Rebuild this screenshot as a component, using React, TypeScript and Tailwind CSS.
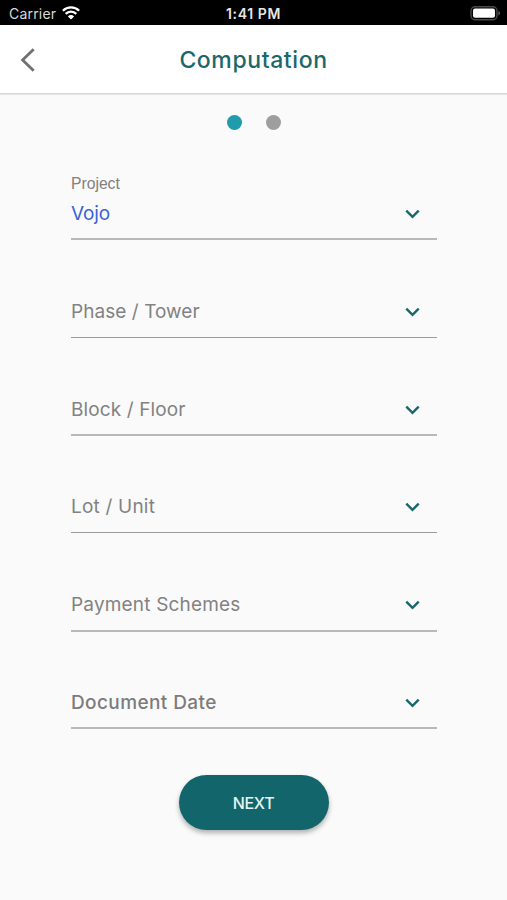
import React from 'react';

type Field = {
  label: string;
  value?: string;
  textClass: string;
  lineClass: string;
};

const THIN = 'h-px bg-[#9b9b9b]';
const THICK = 'h-[2px] bg-[#b8b8b8]';

const FIELDS: Field[] = [
  { label: 'Project', value: 'Vojo', textClass: 'text-[#3a63d6] tracking-[-0.1px]', lineClass: THICK },
  { label: 'Phase / Tower', textClass: 'text-[#828282] tracking-[0.06px]', lineClass: `${THIN} mt-px` },
  { label: 'Block / Floor', textClass: 'text-[#828282] tracking-[0.12px]', lineClass: THICK },
  { label: 'Lot / Unit', textClass: 'text-[#828282] tracking-[0.2px]', lineClass: THIN },
  { label: 'Payment Schemes', textClass: 'text-[#828282] tracking-[0.18px]', lineClass: THICK },
  { label: 'Document Date', textClass: 'text-[#7c7c7c] font-medium tracking-[0.4px]', lineClass: THICK },
];

function StatusBar() {
  return (
    <div className="grid h-[25px] grid-cols-3 items-center bg-black pt-[2px] text-white">
      <div className="flex items-center gap-[6px] pl-[9px] text-[14px] leading-none text-[#d8d8d8]">
        <span className="tracking-[0.2px]">Carrier</span>
        <svg className="-mt-[2px]" width="18" height="14" viewBox="0 0 18 14" fill="none" stroke="#fff" strokeWidth="2.3">
          <path d="M0.9 4.8a11.5 11.5 0 0 1 16.2 0" />
          <path d="M3.7 7.9a7.5 7.5 0 0 1 10.6 0" />
          <path d="M9 13.6 5.9 10.4a4.4 4.4 0 0 1 6.2 0Z" fill="#fff" stroke="none" />
        </svg>
      </div>
      <div className="text-center text-[14px] leading-none font-semibold tracking-[0.6px] text-[#e6e6e6]">1:41 PM</div>
      <div className="flex justify-end pr-[6px]">
        <svg width="31" height="15" viewBox="0 0 31 15">
          <rect x="1" y="0.7" width="26" height="13" rx="4" fill="none" stroke="#4a4a4a" strokeWidth="1.4" />
          <rect x="3" y="2.6" width="22" height="9.2" rx="2" fill="#fff" />
          <path d="M28.4 5v4.4c1.2-.5 1.7-1.2 1.7-2.2s-.5-1.7-1.7-2.2Z" fill="#5a5a5a" />
        </svg>
      </div>
    </div>
  );
}

function Header() {
  return (
    <header className="grid h-[69px] grid-cols-[60px_1fr_60px] items-center border-b border-[#d6d6d6] bg-white shadow-[0_1px_1px_rgba(0,0,0,0.08)]">
      <button className="flex pt-px pl-[20px]" aria-label="Back">
        <svg width="16" height="26" viewBox="0 0 16 26" fill="none" stroke="#707070" strokeWidth="2.8">
          <path d="M13.7 2.2 2.6 13l11.1 10.8" />
        </svg>
      </button>
      <h1 className="pt-[2px] text-center text-[23px] leading-none font-medium tracking-[0.6px] text-[#1a686b]">
        Computation
      </h1>
    </header>
  );
}

function SelectField({ field }: { field: Field }) {
  return (
    <div className="flex h-[97.8px] flex-col justify-end">
      {field.value && (
        <span className="mb-[8px] font-['Liberation_Sans',sans-serif] text-[15.7px] leading-[18px] text-[#808080]">
          {field.label}
        </span>
      )}
      <div className="flex h-[26px] items-center justify-between pr-[17px]">
        <span className={`text-[19px] leading-[26px] ${field.textClass}`}>{field.value ?? field.label}</span>
        <svg width="15" height="10" viewBox="0 0 15 10" fill="none" stroke="#17686b" strokeWidth="2.4">
          <path d="M1.3 1.7 7.5 7.8l6.2-6.1" />
        </svg>
      </div>
      {/* fixed-height slot keeps the captions level whatever the rule's thickness */}
      <div className="flex h-[13.3px] flex-col pt-[11.3px]">
        <div className={`shrink-0 ${field.lineClass}`} />
      </div>
    </div>
  );
}

export default function App() {
  return (
    <div className="flex h-[900px] w-[507px] flex-col bg-[#fafafa] font-[Inter,sans-serif]">
      <StatusBar />
      <Header />
      <div className="mt-[21px] flex justify-center gap-[24px]">
        <span className="size-[15px] rounded-full bg-[#209bab]" />
        <span className="size-[15px] rounded-full bg-[#9e9e9e]" />
      </div>
      <main className="mt-[12.6px] ml-[71px] w-[366px]">
        {FIELDS.map((field) => (
          <SelectField key={field.label} field={field} />
        ))}
      </main>
      <button className="mx-auto mt-[45.6px] h-[55px] w-[150px] rounded-full bg-[#12666b] pt-[2px] text-[16px] font-medium tracking-[-0.3px] text-[#e4f4f4] shadow-[0_3px_5px_rgba(0,0,0,0.3)]">
        NEXT
      </button>
    </div>
  );
}
